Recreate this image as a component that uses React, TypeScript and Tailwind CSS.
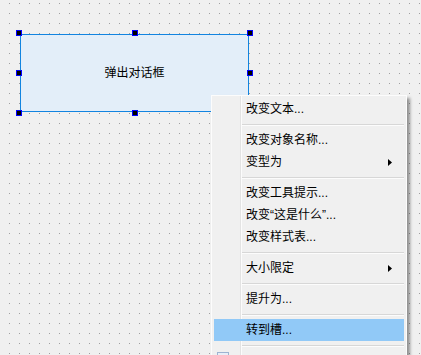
const font = { fontFamily: '"Liberation Sans", "Noto Sans CJK SC", sans-serif' };

type Entry = { label?: string; sub?: boolean; active?: boolean; icon?: boolean; sep?: boolean };

const entries: Entry[] = [
  { label: "改变文本..." },
  { sep: true },
  { label: "改变对象名称..." },
  { label: "变型为", sub: true },
  { sep: true },
  { label: "改变工具提示..." },
  { label: "改变\u201c这是什么\u201d..." },
  { label: "改变样式表..." },
  { sep: true },
  { label: "大小限定", sub: true },
  { sep: true },
  { label: "提升为..." },
  { sep: true },
  { label: "转到槽...", active: true },
  { sep: true },
  { label: "", icon: true },
];

function Handle() {
  return <div className="w-[6px] h-[6px] border border-[#0000ff] bg-black" />;
}

function HandleRow({ middle = true }: { middle?: boolean }) {
  return (
    <div className="flex justify-between">
      <Handle />
      {middle && <Handle />}
      <Handle />
    </div>
  );
}

function MenuRow({ item }: { item: Entry }) {
  if (item.sep) {
    return (
      <div className="h-[9px] pl-[28px] pt-[4px]">
        <div className="h-px bg-[#d7d7d7]" />
        <div className="h-px bg-[#fcfcfc]" />
      </div>
    );
  }
  return (
    <div
      className={`h-[22px] flex items-center pr-[12px] text-[12px] text-black ${
        item.active ? "bg-[#91c9f7]" : ""
      }`}
    >
      <div className="w-[32px] self-stretch pl-[3px] pt-[2px]">
        {item.icon && <div className="w-[12px] h-[12px] border border-[#9db3d1] bg-[#e8eef7]" />}
      </div>
      <span className="flex-1 leading-none">{item.label}</span>
      {item.sub && (
        <svg width="4" height="7" viewBox="0 0 4 7">
          <path d="M0 0 L4 3.5 L0 7 Z" fill="#000" />
        </svg>
      )}
    </div>
  );
}

export default function App() {
  return (
    <div className="relative w-[421px] h-[355px] overflow-hidden bg-[#f0f0f0]" style={font}>
      <svg className="absolute inset-0" width="421" height="355">
        <defs>
          <pattern id="dots" x="9" y="3" width="10" height="10" patternUnits="userSpaceOnUse">
            <rect x="0" y="0" width="1" height="1" fill="#a0a0a0" />
          </pattern>
        </defs>
        <rect width="421" height="355" fill="url(#dots)" />
      </svg>

      {/* selected widget on the form canvas */}
      <div className="absolute left-[16px] top-[30px] w-[237px] h-[86px] p-[4px]">
        <div className="w-[229px] h-[78px] border border-[#1284e0] bg-[#e3eef9] flex items-center justify-center text-[12px] text-black">
          弹出对话框
        </div>
        <div className="absolute inset-0 flex flex-col justify-between">
          <HandleRow />
          <HandleRow middle={false} />
          <HandleRow />
        </div>
      </div>

      {/* context menu */}
      <div className="absolute left-[211px] top-[95px] w-[196px] border border-[#fcfcfc] bg-[#f0f0f0] p-[2px] shadow-[3px_3px_3px_rgba(0,0,0,0.4)]">
        <div className="absolute left-[28px] top-0 bottom-0 w-px bg-[#e3e3e3]" />
        <div className="absolute left-[29px] top-0 bottom-0 w-px bg-[#fcfcfc]" />
        <div className="relative flex flex-col">
          {entries.map((item, i) => (
            <MenuRow key={i} item={item} />
          ))}
        </div>
      </div>
    </div>
  );
}
